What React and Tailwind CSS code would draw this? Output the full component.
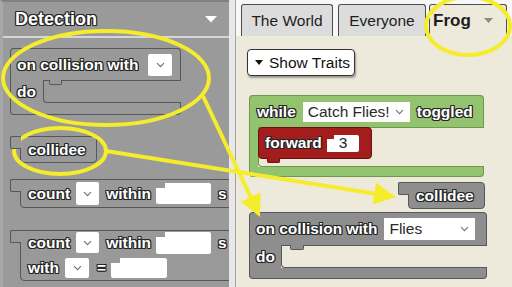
import React from "react";

const OUT =
  "[text-shadow:1px_0_0_#262626,-1px_0_0_#262626,0_1px_0_#262626,0_-1px_0_#262626,1px_1px_0_#262626,-1px_-1px_0_#262626,1px_-1px_0_#262626,-1px_1px_0_#262626]";

function L({ children, className = "" }) {
  return (
    <span
      className={`text-white font-bold text-[15.5px] leading-none whitespace-nowrap ${OUT} ${className}`}
    >
      {children}
    </span>
  );
}

function Chev({ color = "#707070" }) {
  return (
    <svg width="9" height="6" viewBox="0 0 9 6" className="shrink-0">
      <path d="M1 1.2L4.5 4.7L8 1.2" fill="none" stroke={color} strokeWidth="1.1" />
    </svg>
  );
}

function Tab({ bg }) {
  return (
    <div
      className={`relative z-10 -mr-px w-[11px] h-[13px] shrink-0 border border-r-0 border-[#575757] rounded-l-[2px] ${bg}`}
    />
  );
}

function FlyoutPanel() {
  return (
    <div className="w-[229px] h-full shrink-0 bg-[#9a9a9a] flex flex-col overflow-hidden border-t-2 border-t-[#808080] border-l-[3px] border-l-[#a7a7a7]">
      <div className="h-[34px] shrink-0 flex items-center justify-between pl-[12px] pr-[12px]">
        <span className={`text-white font-bold text-[18px] leading-none ${OUT}`}>Detection</span>
        <svg width="12" height="7" viewBox="0 0 12 7">
          <polygon points="0,0 12,0 6,6.5" fill="#ffffff" />
        </svg>
      </div>
      <div className="h-[2px] shrink-0 bg-[#d6d6d6]" />
      <div className="flex flex-col items-start pl-[7px] pt-[10px]">
        {/* on collision with */}
        <div className="flex flex-col w-[171px]">
          <div className="h-[32px] bg-[#999999] border border-b-0 border-[#575757] rounded-t-[4px] flex items-center justify-between pl-[6px] pr-[8px]">
            <L>on collision with</L>
            <div className="w-[24px] h-[22px] bg-white rounded-[2px] flex items-center justify-center">
              <Chev />
            </div>
          </div>
          <div className="flex h-[23px]">
            <div className="w-[33px] bg-[#999999] border-l border-[#575757] flex items-center pl-[6px]">
              <L>do</L>
            </div>
            <div className="flex-1 border-t border-l border-b border-[#575757] rounded-bl-[4px]">
              <div className="ml-[5px] -mt-px w-[13px] h-[5px] bg-[#999999] border border-t-0 border-[#575757] rounded-b-[2px]" />
            </div>
          </div>
          <div className="h-[12px] bg-[#999999] border border-t-0 border-[#575757] rounded-b-[4px]" />
        </div>

        {/* collidee */}
        <div className="flex items-start mt-[21px]">
          <Tab bg="bg-[#999999]" />
          <div className="w-[77px] h-[27px] shrink-0 bg-[#999999] border border-[#575757] rounded-r-[4px] rounded-bl-[4px] flex items-center pl-[7px]">
            <L>collidee</L>
          </div>
        </div>

        {/* count within */}
        <div className="flex items-start mt-[16px]">
          <Tab bg="bg-[#999999]" />
          <div className="w-[260px] h-[29px] shrink-0 bg-[#999999] border border-[#575757] rounded-r-[4px] rounded-bl-[4px] flex items-center pl-[7px]">
            <L>count</L>
            <div className="ml-[6px] w-[23px] h-[23px] bg-white rounded-[2px] flex items-center justify-center shrink-0">
              <Chev />
            </div>
            <L className="ml-[7px]">within</L>
            <div className="ml-[5px] flex h-[21px] items-stretch shrink-0">
              <div className="w-[9px] mt-[5px] bg-white rounded-bl-[2px]" />
              <div className="w-[46px] bg-white rounded-r-[2px]" />
            </div>
            <L className="ml-[7px]">s</L>
          </div>
        </div>

        {/* count within with = */}
        <div className="flex items-start mt-[22px]">
          <Tab bg="bg-[#999999]" />
          <div className="w-[260px] h-[51px] shrink-0 bg-[#999999] border border-[#575757] rounded-r-[4px] rounded-bl-[4px] flex flex-col pl-[7px]">
            <div className="h-[23px] flex items-center">
              <L>count</L>
              <div className="ml-[6px] w-[23px] h-[21px] bg-white rounded-[2px] flex items-center justify-center shrink-0">
                <Chev />
              </div>
              <L className="ml-[7px]">within</L>
              <div className="ml-[5px] flex h-[22px] items-stretch shrink-0">
                <div className="w-[9px] mt-[5px] bg-white rounded-bl-[2px]" />
                <div className="w-[46px] bg-white rounded-r-[2px]" />
              </div>
              <L className="ml-[7px]">s</L>
            </div>
            <div className="h-[23px] mt-[2px] flex items-center">
              <L>with</L>
              <div className="ml-[6px] w-[24px] h-[20px] bg-white rounded-[2px] flex items-center justify-center shrink-0">
                <Chev />
              </div>
              <L className="ml-[8px]">=</L>
              <div className="ml-[5px] flex h-[20px] items-stretch shrink-0">
                <div className="w-[9px] mt-[5px] bg-white rounded-bl-[2px]" />
                <div className="w-[47px] bg-white rounded-r-[2px]" />
              </div>
            </div>
          </div>
        </div>
      </div>
    </div>
  );
}

function Workspace() {
  return (
    <div className="flex-1 h-full flex flex-col border-l border-[#a3a3a3]">
      <div className="h-[36px] shrink-0 bg-[#f7f7f7] flex items-end pl-[5px]">
        <div className="w-[92px] h-[32px] bg-[#dcdcdc] border border-b-0 border-[#4d4d4d] rounded-t-[3px] flex items-center justify-center text-[15.5px] text-[#1e1e1e] leading-none">
          The World
        </div>
        <div className="ml-[5px] w-[88px] h-[32px] bg-[#dcdcdc] border border-b-0 border-[#4d4d4d] rounded-t-[3px] flex items-center justify-center text-[15.5px] text-[#1e1e1e] leading-none">
          Everyone
        </div>
        <div className="ml-[3px] w-[78px] h-[32px] bg-[#eeeadb] border border-b-0 border-[#4d4d4d] rounded-t-[3px] flex items-center pl-[3px] text-[17px] font-bold text-[#1e1e1e] leading-none">
          Frog
          <svg width="9" height="5" viewBox="0 0 9 5" className="ml-[13px]">
            <polygon points="0,0 9,0 4.5,5" fill="#8a8a8a" />
          </svg>
        </div>
      </div>

      <div className="flex-1 bg-[#eeeadb] flex flex-col items-start pl-[11px] pt-[13px]">
        <div className="w-[108px] h-[27px] bg-white border border-[#333333] rounded-[4px] shadow-[1px_2px_2px_rgba(0,0,0,0.35)] flex items-center pl-[7px] text-[15.5px] text-[#111111] leading-none">
          <svg width="8" height="5" viewBox="0 0 8 5">
            <polygon points="0,0 8,0 4,5" fill="#111111" />
          </svg>
          <span className="ml-[6px]">Show Traits</span>
        </div>

        {/* while block */}
        <div className="flex flex-col w-[235px] ml-[2px] mt-[19px]">
          <div className="h-[32px] bg-[#93c36f] border border-b-0 border-[#6b9a4a] rounded-t-[4px] flex items-center pl-[7px]">
            <L>while</L>
            <div className="ml-[7px] w-[107px] h-[20px] bg-white flex items-center justify-between pl-[5px] pr-[6px] text-[15.5px] text-[#2a2a2a] leading-none">
              Catch Flies!
              <Chev />
            </div>
            <L className="ml-[7px]">toggled</L>
          </div>
          <div className="flex h-[40px]">
            <div className="w-[9px] bg-[#93c36f] border-l border-[#6b9a4a]" />
            <div className="flex-1 border-t border-l border-b border-[#6b9a4a] rounded-bl-[4px] flex flex-col items-start">
              <div className="-mt-px -ml-px flex flex-col items-start">
                <div className="w-[114px] h-[32px] bg-[#a41d1d] border border-[#6b0f0f] rounded-[4px] flex items-center pl-[6px]">
                  <L>forward</L>
                  <div className="ml-[5px] flex h-[17px] items-stretch">
                    <div className="w-[7px] mt-[4px] bg-white" />
                    <div className="w-[25px] bg-white rounded-r-[2px] flex items-center pl-[5px] text-[15.5px] text-[#222222] leading-none">
                      3
                    </div>
                  </div>
                </div>
                <div className="ml-[9px] -mt-px w-[13px] h-[5px] bg-[#a41d1d] border border-t-0 border-[#6b0f0f] rounded-b-[2px]" />
              </div>
            </div>
          </div>
          <div className="h-[10px] bg-[#93c36f] border border-t-0 border-[#6b9a4a] rounded-b-[4px]" />
        </div>

        {/* collidee */}
        <div className="flex items-start ml-[151px] mt-[5px]">
          <Tab bg="bg-[#8e8e8e]" />
          <div className="w-[77px] h-[27px] bg-[#8e8e8e] border border-[#575757] rounded-r-[4px] rounded-bl-[4px] flex items-center pl-[7px]">
            <L>collidee</L>
          </div>
        </div>

        {/* on collision with */}
        <div className="flex flex-col w-[238px] ml-[2px] mt-[3px]">
          <div className="h-[33px] bg-[#8e8e8e] border border-b-0 border-[#575757] rounded-t-[4px] flex items-center pl-[6px]">
            <L>on collision with</L>
            <div className="ml-[7px] w-[91px] h-[22px] bg-white flex items-center justify-between pl-[5px] pr-[6px] text-[15.5px] text-[#2a2a2a] leading-none">
              Flies
              <Chev />
            </div>
          </div>
          <div className="flex h-[23px]">
            <div className="w-[32px] bg-[#8e8e8e] border-l border-[#575757] flex items-center pl-[6px]">
              <L>do</L>
            </div>
            <div className="flex-1 border-t border-l border-b border-[#575757] rounded-bl-[4px]">
              <div className="ml-[8px] -mt-px w-[14px] h-[5px] bg-[#8e8e8e] border border-t-0 border-[#575757] rounded-b-[2px]" />
            </div>
          </div>
          <div className="h-[11px] bg-[#8e8e8e] border border-t-0 border-[#575757] rounded-b-[4px]" />
        </div>
      </div>
    </div>
  );
}

function Annotations() {
  const Y = "#f4ec2c";
  return (
    <svg
      className="absolute inset-0 pointer-events-none"
      width="512"
      height="287"
      viewBox="0 0 512 287"
    >
      <ellipse cx="106" cy="78" rx="103" ry="47" fill="none" stroke={Y} strokeWidth="4" />
      <ellipse cx="60" cy="151" rx="46" ry="23" fill="none" stroke={Y} strokeWidth="4" />
      <ellipse cx="468" cy="26" rx="42" ry="29" fill="none" stroke={Y} strokeWidth="4" />
      <line x1="203" y1="96" x2="252" y2="200" stroke={Y} strokeWidth="4" />
      <polygon points="260,217 260.6,192.4 240.7,201.8" fill={Y} />
      <line x1="106" y1="151" x2="377" y2="194" stroke={Y} strokeWidth="4" />
      <polygon points="396,197 376,182.6 372.6,204.4" fill={Y} />
    </svg>
  );
}

export default function App() {
  return (
    <div className="relative w-[512px] h-[287px] overflow-hidden flex bg-[#e6e6e6] font-['Liberation_Sans',Arial,sans-serif]">
      <FlyoutPanel />
      <div className="w-[6px] h-full shrink-0 bg-[#e8e8e8]" />
      <Workspace />
      <Annotations />
    </div>
  );
}
